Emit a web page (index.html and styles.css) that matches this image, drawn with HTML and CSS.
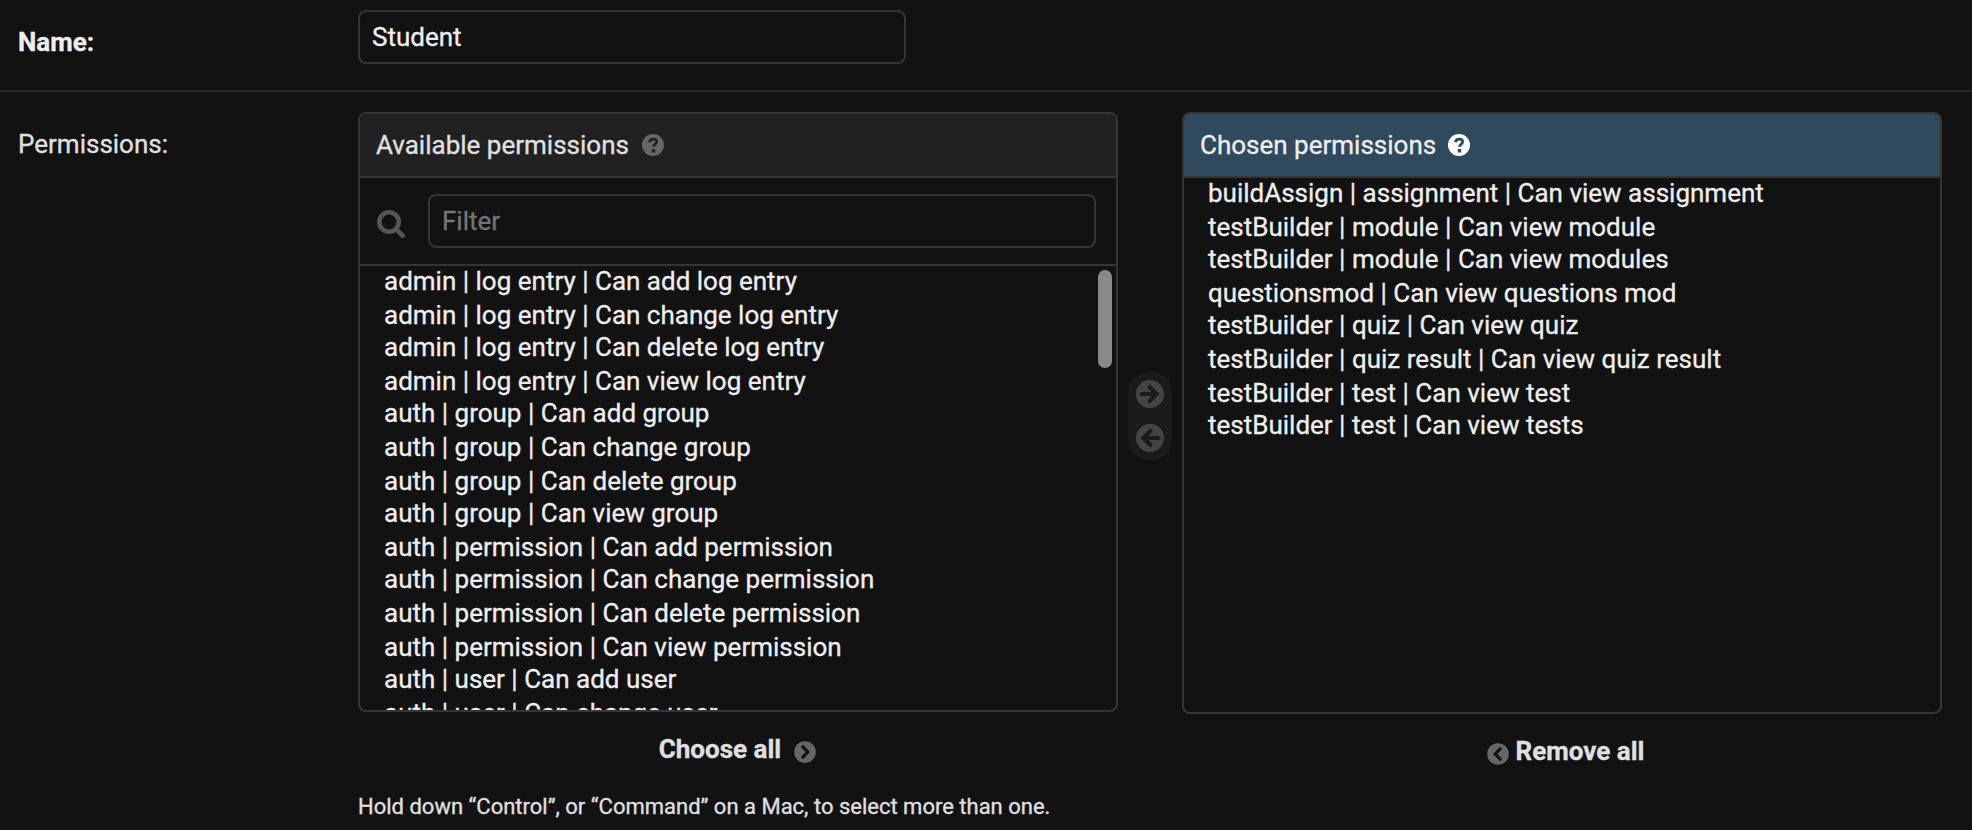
FILE: index.html
```
<!DOCTYPE html>
<html lang="en">
<head>
<meta charset="utf-8">
<title>Change group</title>
<link rel="stylesheet" href="styles.css">
</head>
<body>
<form class="form">
  <div class="form-row name-row">
    <label class="label required" for="name">Name:</label>
    <input class="text-input name-input" id="name" type="text" value="Student">
  </div>
  <div class="form-row permissions-row">
    <div class="label">Permissions:</div>
    <div class="field">
      <div class="selector">
        <div class="column">
          <section class="panel available">
            <h2 class="panel-title">Available permissions
              <svg class="help" viewBox="0 0 22 22"><circle cx="11" cy="11" r="11" fill="#666"/><path d="M7.4 8.2C7.8 6 9.1 5.1 11.1 5.1c2.1 0 3.5 1.1 3.5 2.8 0 2.5-3.1 2.3-3.1 4.9" fill="none" stroke="#212121" stroke-width="2.8"/><path d="M9.8 15h3.4v3.4H9.8z" fill="#212121"/></svg>
            </h2>
            <div class="filter">
              <svg class="search" viewBox="0 0 28 28"><circle cx="12" cy="12" r="9.7" fill="none" stroke="#555" stroke-width="4.6"/><path d="M19 19l6.6 6.6" stroke="#555" stroke-width="4.6" stroke-linecap="round"/></svg>
              <input class="text-input filter-input" type="text" placeholder="Filter">
            </div>
            <ul class="options">
              <li>admin | log entry | Can add log entry</li>
              <li>admin | log entry | Can change log entry</li>
              <li>admin | log entry | Can delete log entry</li>
              <li>admin | log entry | Can view log entry</li>
              <li>auth | group | Can add group</li>
              <li>auth | group | Can change group</li>
              <li>auth | group | Can delete group</li>
              <li>auth | group | Can view group</li>
              <li>auth | permission | Can add permission</li>
              <li>auth | permission | Can change permission</li>
              <li>auth | permission | Can delete permission</li>
              <li>auth | permission | Can view permission</li>
              <li>auth | user | Can add user</li>
              <li>auth | user | Can change user</li>
            </ul>
            <span class="scroll-thumb"></span>
          </section>
          <a class="bulk choose-all">Choose all
            <svg class="chevron" viewBox="0 0 22 22"><circle cx="11" cy="11" r="10.8" fill="#666"/><path d="M8.8 5.8L13.8 11l-5 5.2" fill="none" stroke="#121212" stroke-width="3.2" stroke-linecap="round"/></svg>
          </a>
        </div>
        <div class="chooser">
          <svg class="arrow" viewBox="0 0 28 28"><circle cx="14" cy="14" r="14" fill="#444"/><path d="M5.6 14h14M13.6 7l7 7-7 7" fill="none" stroke="#1b1b1b" stroke-width="4.2" stroke-linecap="round"/></svg>
          <svg class="arrow" viewBox="0 0 28 28"><circle cx="14" cy="14" r="14" fill="#444"/><path d="M22.4 14h-14M14.4 7l-7 7 7 7" fill="none" stroke="#1b1b1b" stroke-width="4.2" stroke-linecap="round"/></svg>
        </div>
        <div class="column">
          <section class="panel chosen">
            <h2 class="panel-title">Chosen permissions
              <svg class="help" viewBox="0 0 22 22"><circle cx="11" cy="11" r="11" fill="#fff"/><path d="M7.4 8.2C7.8 6 9.1 5.1 11.1 5.1c2.1 0 3.5 1.1 3.5 2.8 0 2.5-3.1 2.3-3.1 4.9" fill="none" stroke="#304a5d" stroke-width="2.8"/><path d="M9.8 15h3.4v3.4H9.8z" fill="#304a5d"/></svg>
            </h2>
            <ul class="options">
              <li>buildAssign | assignment | Can view assignment</li>
              <li>testBuilder | module | Can view module</li>
              <li>testBuilder | module | Can view modules</li>
              <li>questionsmod | Can view questions mod</li>
              <li>testBuilder | quiz | Can view quiz</li>
              <li>testBuilder | quiz result | Can view quiz result</li>
              <li>testBuilder | test | Can view test</li>
              <li>testBuilder | test | Can view tests</li>
            </ul>
          </section>
          <a class="bulk remove-all">
            <svg class="chevron" viewBox="0 0 22 22"><circle cx="11" cy="11" r="10.8" fill="#666"/><path d="M13.2 5.8L8.2 11l5 5.2" fill="none" stroke="#121212" stroke-width="3.2" stroke-linecap="round"/></svg>
            Remove all</a>
        </div>
      </div>
      <p class="help-text">Hold down “Control”, or “Command” on a Mac, to select more than one.</p>
    </div>
  </div>
</form>
</body>
</html>
```
FILE: styles.css
```
* {
  box-sizing: border-box;
}

body {
  margin: 0;
  height: 830px;
  overflow: hidden;
  background: #121212;
  color: #e0e0e0;
  font: 26px/30px Roboto, sans-serif;
  -webkit-text-stroke: 0.3px;
}

svg {
  display: block;
  flex: none;
}

.form-row {
  display: flex;
  padding-left: 18px;
}

.name-row {
  height: 92px;
  padding-top: 10px;
  border-bottom: 2px solid #272727;
}

.permissions-row {
  padding-top: 20px;
}

.label {
  width: 340px;
  flex: none;
  padding-top: 17px;
}

.required {
  color: #eee;
  font-weight: 700;
}

.text-input {
  height: 54px;
  padding: 0 12px 1px;
  border: 2px solid #353535;
  border-radius: 8px;
  outline: 0;
  background: #121212;
  color: #eee;
  font: inherit;
  -webkit-text-stroke: 0.3px;
}

.text-input::placeholder {
  color: #757575;
}

.name-input {
  width: 548px;
}

.selector {
  display: flex;
}

.column {
  width: 760px;
}

.panel {
  position: relative;
  display: flex;
  flex-direction: column;
  height: 600px;
  border: 2px solid #353535;
  border-radius: 8px;
  overflow: hidden;
}

.chosen {
  height: 602px;
}

.panel-title {
  display: flex;
  align-items: center;
  gap: 13px;
  flex: none;
  height: 64px;
  margin: 0;
  padding: 0 16px;
  border-bottom: 2px solid #353535;
  background: #212121;
  font-size: 26px;
  font-weight: 400;
}

.chosen .panel-title {
  gap: 12px;
  background: #304a5d;
  color: #eee;
}

.help {
  width: 22px;
  height: 22px;
}

.filter {
  display: flex;
  flex: none;
  height: 88px;
  padding: 16px 20px 16px 17px;
  border-bottom: 2px solid #353535;
}

.search {
  width: 28px;
  height: 28px;
  margin: 16px 23px 0 0;
}

.filter-input {
  flex: 1;
  min-width: 0;
}

.options {
  margin: 0;
  padding: 0 24px;
  list-style: none;
  color: #eee;
  white-space: nowrap;
}

.options li {
  height: 34px;
}

.options li:nth-child(5n + 2),
.options li:nth-child(5n + 4) {
  height: 32px;
}

.scroll-thumb {
  position: absolute;
  top: 156px;
  right: 4px;
  width: 14px;
  height: 98px;
  border-radius: 7px;
  background: #898989;
}

.bulk {
  display: flex;
  justify-content: center;
  margin-top: 22px;
  font-weight: 700;
}

.choose-all {
  gap: 13px;
  padding-right: 1px;
}

.remove-all {
  gap: 7px;
  padding-left: 7px;
}

.chevron {
  width: 22px;
  height: 22px;
  margin-top: 7px;
}

.chooser {
  display: flex;
  flex-direction: column;
  align-items: center;
  gap: 16px;
  width: 44px;
  height: 88px;
  margin: 260px 10px 0;
  padding-top: 8px;
  border-radius: 20px;
  background: #1b1b1b;
}

.arrow {
  width: 28px;
  height: 28px;
}

.help-text {
  margin: 28px 0 0;
  font-size: 22px;
  line-height: 26px;
}
```
